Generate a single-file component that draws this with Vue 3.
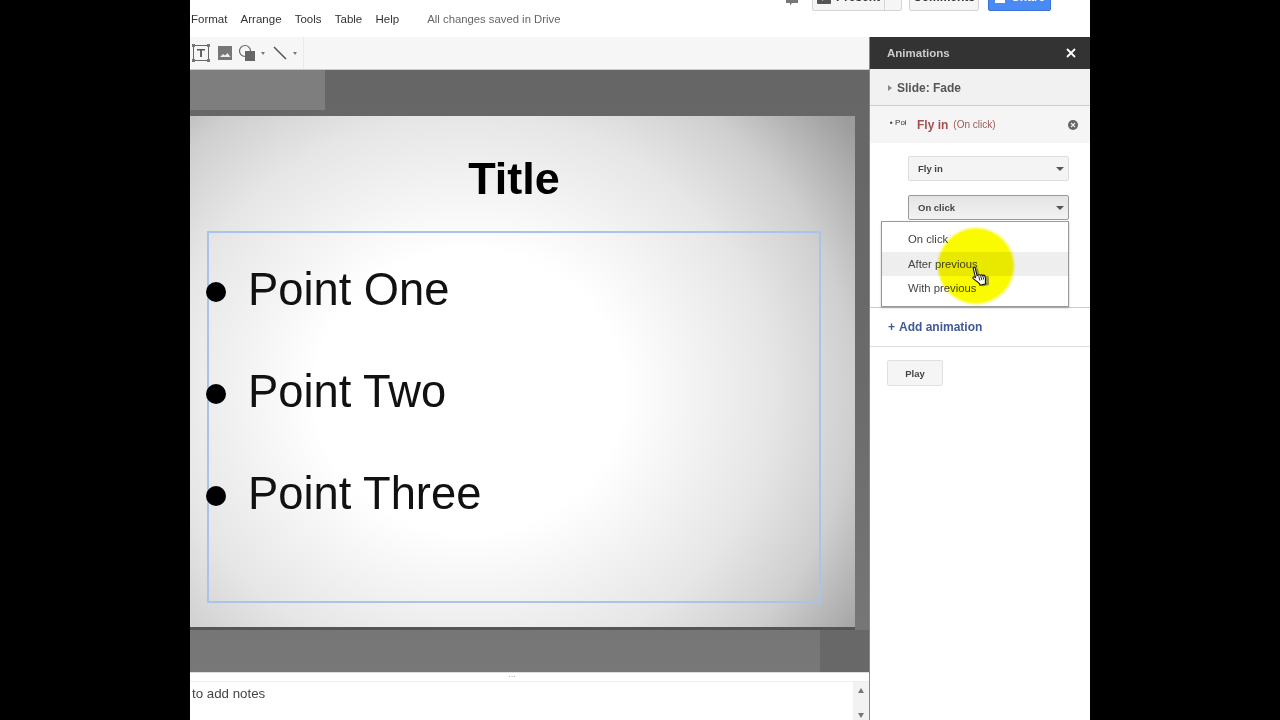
<script setup>
const menus = ["Format", "Arrange", "Tools", "Table", "Help"];
const points = ["Point One", "Point Two", "Point Three"];
const timings = ["On click", "After previous", "With previous"];
</script>

<template>
  <div class="screen">
    <div class="app">
      <header class="topbar">
        <nav class="menus">
          <span v-for="m in menus" :key="m" class="menu">{{ m }}</span>
          <span class="saved">All changes saved in Drive</span>
        </nav>
        <div class="actions">
          <svg class="chat" viewBox="0 0 12 12" width="12" height="12">
            <path d="M0 0h12v8H6l-2 2.500V8H0z" fill="#777" />
          </svg>
          <div class="btn present">
            <span class="present-main">
              <svg viewBox="0 0 14 14" width="14" height="14">
                <rect x="0" y="0" width="14" height="14" rx="1" fill="#555" />
                <path d="M5 3l5 4-5 4z" fill="#eee" />
              </svg>
              Present
            </span>
            <span class="present-arrow"><i class="caret"></i></span>
          </div>
          <div class="btn comments">Comments</div>
          <div class="btn share">
            <svg viewBox="0 0 12 12" width="12" height="12">
              <rect x="1" y="4" width="10" height="8" fill="#fff" />
            </svg>
            Share
          </div>
        </div>
      </header>

      <div class="work">
        <div class="main">
          <div class="toolbar">
            <div class="tools">
              <svg viewBox="0 0 18 18" width="18" height="18">
                <rect x="1.500" y="1.500" width="15" height="15" fill="none" stroke="#666" stroke-width="1" />
                <path d="M0 0h3v3H0zM15 0h3v3h-3zM0 15h3v3H0zM15 15h3v3h-3z" fill="#777" />
                <path d="M5 5h8v1.600h-3.100v6.400H8.100V6.600H5z" fill="#555" />
              </svg>
              <svg class="tool-img" viewBox="0 0 14 14" width="14" height="14">
                <rect width="14" height="14" fill="#777" />
                <path d="M2 11l3-3 2 1.500L9.500 7l3 4z" fill="#eee" />
              </svg>
              <svg class="tool-shape" viewBox="0 0 18 18" width="18" height="18">
                <circle cx="7" cy="7" r="5.500" fill="none" stroke="#666" stroke-width="1.200" />
                <rect x="7" y="7" width="10" height="10" fill="#666" />
              </svg>
              <i class="caret small first"></i>
              <svg class="tool-line" viewBox="0 0 14 14" width="14" height="14">
                <path d="M1 1l12 12" stroke="#555" stroke-width="1.500" />
              </svg>
              <i class="caret small"></i>
            </div>
          </div>

          <div class="canvas">
            <div class="filmstrip-shade"></div>
            <div class="corner-shade"></div>
            <section class="slide">
              <h1 class="title">Title</h1>
              <div class="body-box">
                <div v-for="p in points" :key="p" class="point">
                  <i class="bullet"></i>
                  <span>{{ p }}</span>
                </div>
              </div>
            </section>
          </div>

          <div class="notes">
            <div class="grip">···</div>
            <div class="notes-body">
              <span>to add notes</span>
              <div class="scroll">
                <i class="up"></i>
                <i class="down"></i>
              </div>
            </div>
          </div>
        </div>

        <aside class="panel">
          <div class="panel-head">
            <span>Animations</span>
            <svg viewBox="0 0 10 10" width="10" height="10">
              <path d="M1 1l8 8M9 1l-8 8" stroke="#fff" stroke-width="1.800" />
            </svg>
          </div>
          <div class="slide-row"><i class="tri"></i>Slide: Fade</div>
          <div class="anim-row">
            <span class="anim-target">▪ Poi</span>
            <span class="anim-name">Fly in</span>
            <span class="anim-when">(On click)</span>
            <svg class="anim-del" viewBox="0 0 10 10" width="10" height="10">
              <circle cx="5" cy="5" r="5" fill="#666" />
              <path d="M3 3l4 4M7 3l-4 4" stroke="#eee" stroke-width="1.200" />
            </svg>
          </div>
          <div class="anim-options">
            <div class="select">Fly in<i class="caret"></i></div>
            <div class="select open">On click<i class="caret"></i></div>
            <ul class="dropdown">
              <li v-for="(t, i) in timings" :key="t" :class="{ hover: i === 1 }">{{ t }}</li>
            </ul>
          </div>
          <div class="add-row"><b>+</b> Add animation</div>
          <div class="play-row"><div class="play">Play</div></div>

          <div class="spot"></div>
          <svg class="hand" viewBox="0 0 18 23" width="18" height="23">
            <g transform="rotate(-14 9 12)">
              <path
                d="M7 2.500v8l1-.2 2 .2 2 .3 2 .7 1.500 1v5l-1.500 3.500H7.500L3 14l-1.500-3c0-1 1.500-1.200 2.500 0l1 1V2.500c0-1.300 2-1.300 2 0z"
                fill="#555"
                opacity=".55"
                transform="translate(2 1)"
              />
              <path
                d="M6.500 2v8l1.500-.4c1-.1 1.500.2 1.800.8.9-.3 1.700 0 2 .7 1-.2 2 .4 2.200 1.300.2 2-.2 4-1 5.600v2H7v-1.800L2 12c-.7-1 .5-2.200 1.700-1.400l.8.700V2c0-1.300 2-1.300 2 0z"
                fill="#fff"
                stroke="#111"
                stroke-width="1.100"
              />
              <path d="M8 11v4.500M10 11v4.500M12 11.500v4" stroke="#111" stroke-width=".8" />
            </g>
          </svg>
        </aside>
      </div>
    </div>
  </div>
</template>

<style scoped>
.screen {
  width: 1280px;
  height: 720px;
  background: #000;
  display: flex;
  justify-content: center;
  overflow: hidden;
  font-family: "Liberation Sans", Arial, sans-serif;
}

.app {
  width: 900px;
  height: 720px;
  background: #fff;
  display: flex;
  flex-direction: column;
  overflow: hidden;
  filter: blur(0.35px);
}

.topbar {
  height: 37px;
  flex-shrink: 0;
  display: flex;
  justify-content: space-between;
  background: #fff;
  overflow: hidden;
}

.menus {
  display: flex;
  align-items: center;
  height: 37px;
  font-size: 11.500px;
  color: #333;
}

.menu {
  margin-right: 13.200px;
}

.menu:first-child {
  margin-left: 1px;
}

.saved {
  margin-left: 15px;
  font-size: 11.300px;
  color: #666;
}

.actions {
  display: flex;
  align-items: flex-start;
  gap: 9px;
  margin-top: -17px;
  margin-right: 39px;
  font-size: 12px;
}

.chat {
  margin-top: 12px;
  margin-right: 5px;
}

.btn {
  height: 26px;
  border: 1px solid #d5d5d5;
  border-radius: 2px;
  background: #f5f5f5;
  color: #333;
  font-weight: bold;
  display: flex;
  align-items: center;
  justify-content: center;
  gap: 6px;
}

.present {
  width: 88px;
  gap: 0;
  margin-right: -2px;
  justify-content: flex-start;
}

.present-main {
  flex: 1;
  height: 100%;
  display: flex;
  align-items: center;
  justify-content: center;
  gap: 5px;
  border-right: 1px solid #d5d5d5;
}

.present-arrow {
  width: 16px;
  display: flex;
  justify-content: center;
}

.comments {
  width: 68px;
}

.share {
  width: 61px;
  background: #4a8af4;
  border-color: #3a74d8;
  color: #fff;
}

.caret {
  display: inline-block;
  width: 0;
  height: 0;
  border-left: 4px solid transparent;
  border-right: 4px solid transparent;
  border-top: 4px solid #555;
}

.caret.small {
  border-left-width: 2.500px;
  border-right-width: 2.500px;
  border-top-width: 3px;
  border-top-color: #777;
}

.caret.first {
  margin-left: 5px;
}

.work {
  flex: 1;
  display: flex;
  min-height: 0;
}

.main {
  width: 679px;
  flex-shrink: 0;
  display: flex;
  flex-direction: column;
  border-right: 1px solid #888;
}

.toolbar {
  height: 33px;
  box-sizing: border-box;
  flex-shrink: 0;
  background: #f6f6f6;
  border-bottom: 1px solid #ccc;
}

.tools {
  width: 114px;
  height: 100%;
  box-sizing: border-box;
  padding-left: 2px;
  border-right: 1px solid #eaeaea;
  display: flex;
  align-items: center;
}

.tool-img {
  margin-left: 8px;
}

.tool-shape {
  margin-left: 6px;
}

.tool-line {
  margin-left: 8px;
  margin-right: 6px;
}

.canvas {
  position: relative;
  flex: 1;
  min-height: 0;
  padding-top: 46px;
  background: linear-gradient(#666 0, #6a6a6a 50%, #787878 100%);
}

.filmstrip-shade {
  position: absolute;
  left: 0;
  top: 0;
  width: 135px;
  height: 40px;
  background: #7e7e7e;
}

.corner-shade {
  position: absolute;
  right: 0;
  bottom: 0;
  width: 49px;
  height: 42px;
  background: #686868;
}

.slide {
  position: relative;
  width: 665px;
  height: 511px;
  box-sizing: border-box;
  padding: 0 34px 0 17px;
  display: flex;
  flex-direction: column;
  background: radial-gradient(ellipse 480px 440px at 42% 54%, #fff 0, #fff 32%, #e6e6e6 63%, #cfcfcf 80%, #9c9c9c 100%);
  box-shadow: 0 3px 0 #555;
}

.title {
  height: 115px;
  margin: 0;
  flex-shrink: 0;
  display: flex;
  align-items: center;
  justify-content: center;
  font-size: 45px;
  font-weight: bold;
  color: #000;
  box-sizing: border-box;
  padding-top: 10px;
}

.body-box {
  width: 614px;
  height: 372px;
  box-sizing: border-box;
  border: 2px solid #a9c4e8;
  padding: 29px 0 0 0;
  display: flex;
  flex-direction: column;
  gap: 47px;
}

.point {
  display: flex;
  align-items: center;
  height: 55px;
  font-size: 45.300px;
  color: #111;
}

.bullet {
  width: 20px;
  height: 20px;
  border-radius: 50%;
  background: #000;
  margin-left: -3px;
  margin-right: 22px;
  margin-top: 4px;
}

.notes {
  height: 48px;
  flex-shrink: 0;
  background: #fff;
  border-top: 1px solid #ddd;
  box-sizing: border-box;
}

.grip {
  height: 8px;
  line-height: 8px;
  text-align: center;
  font-size: 8px;
  color: #999;
  border-bottom: 1px solid #eee;
  padding-right: 35px;
}

.notes-body {
  display: flex;
  justify-content: space-between;
  font-size: 13.300px;
  color: #444;
  padding-left: 2px;
  height: 39px;
}

.notes-body span {
  margin-top: 4px;
}

.scroll {
  width: 16px;
  background: #f2f2f2;
  display: flex;
  flex-direction: column;
  justify-content: space-between;
  align-items: center;
  padding: 6px 0 3px;
  box-sizing: border-box;
}

.up {
  width: 0;
  height: 0;
  border-left: 3.500px solid transparent;
  border-right: 3.500px solid transparent;
  border-bottom: 5px solid #777;
}

.down {
  width: 0;
  height: 0;
  border-left: 3.500px solid transparent;
  border-right: 3.500px solid transparent;
  border-top: 5px solid #777;
}

.panel {
  position: relative;
  flex: 1;
  background: #fff;
  min-width: 0;
}

.panel-head {
  height: 32px;
  background: #333;
  color: #ccc;
  font-size: 11.500px;
  font-weight: bold;
  display: flex;
  align-items: center;
  justify-content: space-between;
  padding: 0 14px 0 17px;
}

.slide-row {
  height: 37px;
  box-sizing: border-box;
  background: #f1f1f1;
  border-bottom: 1px solid #ccc;
  display: flex;
  align-items: center;
  padding: 1px 0 0 18px;
  font-size: 12px;
  font-weight: bold;
  color: #555;
}

.tri {
  width: 0;
  height: 0;
  border-top: 3.500px solid transparent;
  border-bottom: 3.500px solid transparent;
  border-left: 4px solid #888;
  margin-right: 5px;
}

.anim-row {
  height: 37px;
  background: #f5f5f5;
  display: flex;
  align-items: center;
  padding-left: 20px;
  padding-right: 12px;
}

.anim-target {
  width: 27px;
  font-size: 8px;
  color: #333;
  margin-bottom: 5px;
}

.anim-name {
  font-size: 12px;
  font-weight: bold;
  color: #a55050;
  margin-right: 5px;
}

.anim-when {
  font-size: 10px;
  color: #a05858;
  flex: 1;
}

.anim-options {
  position: relative;
  height: 165px;
  box-sizing: border-box;
  padding: 13px 21px 0 38px;
  border-bottom: 1px solid #ccc;
}

.select {
  height: 25px;
  box-sizing: border-box;
  border: 1px solid #ddd;
  border-radius: 2px;
  background: #f4f4f4;
  display: flex;
  align-items: center;
  justify-content: space-between;
  padding: 0 4px 0 9px;
  font-size: 9.500px;
  font-weight: bold;
  color: #444;
  margin-bottom: 14px;
}

.select.open {
  border-color: #999;
  background: linear-gradient(#e4e4e4, #f2f2f2);
}

.dropdown {
  position: absolute;
  left: 11px;
  right: 21px;
  top: 78px;
  margin: 0;
  padding: 5px 0;
  list-style: none;
  background: #fff;
  border: 1px solid #999;
  box-shadow: 0 1px 2px rgba(0, 0, 0, 0.25);
  font-size: 11.300px;
  color: #444;
}

.dropdown li {
  height: 24.500px;
  line-height: 24px;
  padding-left: 26px;
}

.dropdown li.hover {
  background: #eee;
}

.add-row {
  height: 39px;
  box-sizing: border-box;
  border-bottom: 1px solid #ddd;
  display: flex;
  align-items: center;
  gap: 4px;
  padding-left: 18px;
  font-size: 12px;
  font-weight: bold;
  color: #3f5a92;
}

.play-row {
  padding: 13px 0 0 17px;
}

.play {
  width: 56px;
  height: 26px;
  box-sizing: border-box;
  border: 1px solid #e0e0e0;
  border-radius: 2px;
  background: #f5f5f5;
  font-size: 9.500px;
  font-weight: bold;
  color: #444;
  display: flex;
  align-items: center;
  justify-content: center;
}

.spot {
  position: absolute;
  left: 68px;
  top: 191px;
  width: 76px;
  height: 76px;
  border-radius: 50%;
  background: #fafa00;
  mix-blend-mode: multiply;
  filter: blur(1px);
}

.hand {
  position: absolute;
  left: 101px;
  top: 228px;
}
</style>
